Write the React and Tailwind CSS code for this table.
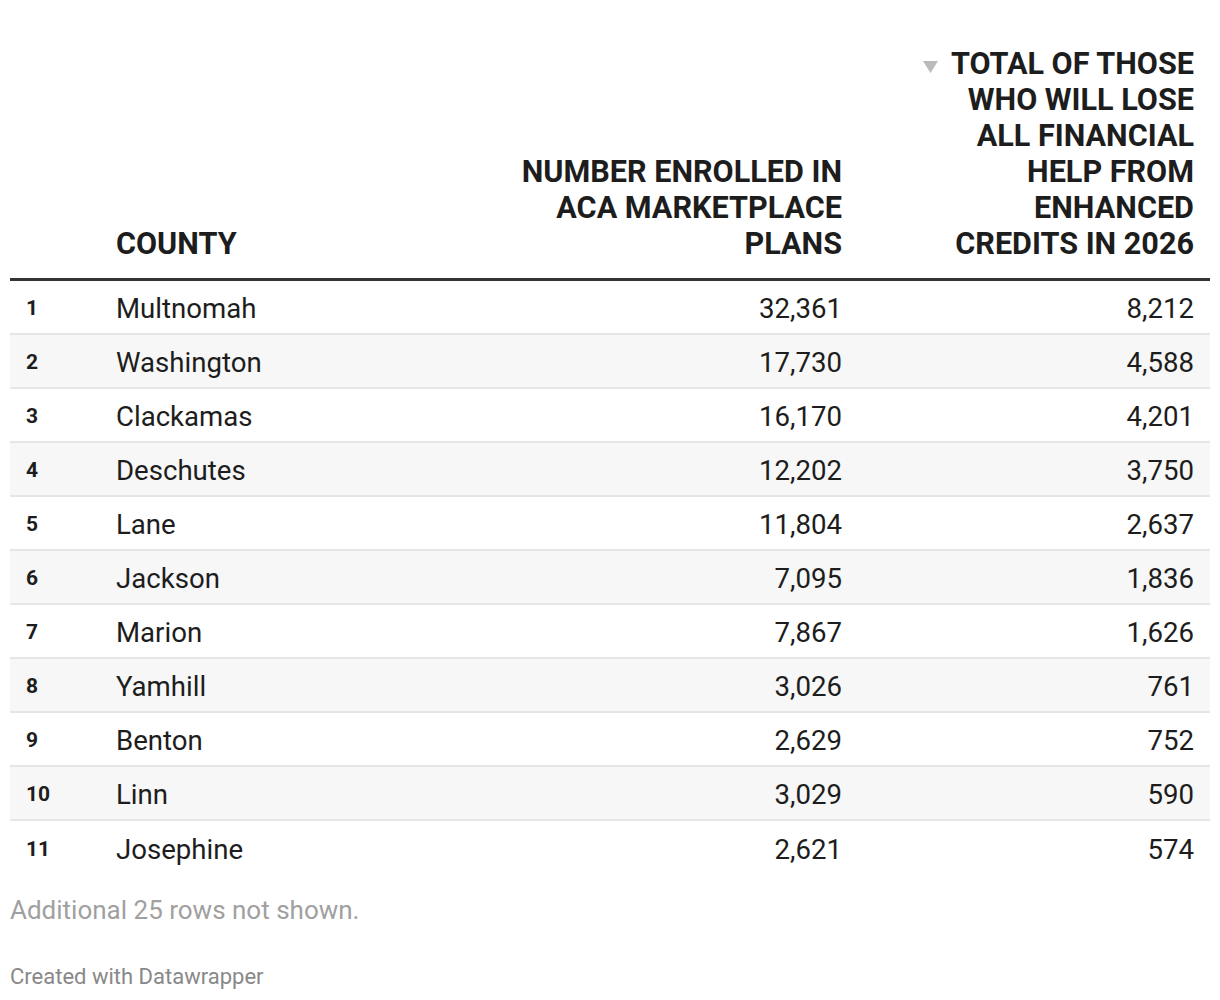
import React from "react";

const rows = [
  ["Multnomah", "32,361", "8,212"],
  ["Washington", "17,730", "4,588"],
  ["Clackamas", "16,170", "4,201"],
  ["Deschutes", "12,202", "3,750"],
  ["Lane", "11,804", "2,637"],
  ["Jackson", "7,095", "1,836"],
  ["Marion", "7,867", "1,626"],
  ["Yamhill", "3,026", "761"],
  ["Benton", "2,629", "752"],
  ["Linn", "3,029", "590"],
  ["Josephine", "2,621", "574"],
];

const App = () => {
  return (
    <div
      className="w-[1220px] bg-white px-[10px] pt-[46px] text-[#1d1d1d]"
      style={{ fontFamily: "Roboto, 'Liberation Sans', sans-serif" }}
    >
      {/* Header */}
      <div className="grid grid-cols-[90px_378px_380px_1fr] items-end border-b-[3px] border-[#333] pb-[16px] text-[30.6px] font-bold leading-[36px]">
        <div />
        <div className="pl-4">COUNTY</div>
        <div className="pr-4 text-right whitespace-nowrap">
          NUMBER ENROLLED IN
          <br />
          ACA MARKETPLACE
          <br />
          PLANS
        </div>
        <div className="pr-4 text-right whitespace-nowrap">
          <svg
            width="15"
            height="12"
            viewBox="0 0 15 12"
            className="mr-[13px] inline-block align-[1px]"
          >
            <path d="M0 0 H15 L7.5 12 Z" fill="#bbb" />
          </svg>
          TOTAL OF THOSE
          <br />
          WHO WILL LOSE
          <br />
          ALL FINANCIAL
          <br />
          HELP FROM
          <br />
          ENHANCED
          <br />
          CREDITS IN 2026
        </div>
      </div>

      {/* Rows */}
      <div>
        {rows.map((r, i) => (
          <div
            key={r[0]}
            className={`grid h-[54px] grid-cols-[90px_378px_380px_1fr] items-center pt-[3px] ${
              i % 2 === 1 ? "bg-[#f7f7f7]" : "bg-white"
            } ${i < rows.length - 1 ? "border-b-2 border-[#e6e6e6]" : ""}`}
          >
            <div className="pl-4 text-[21px] font-bold">{i + 1}</div>
            <div className="pl-4 text-[27.6px]">{r[0]}</div>
            <div className="pr-4 text-right text-[27.6px]">{r[1]}</div>
            <div className="pr-4 text-right text-[27.6px]">{r[2]}</div>
          </div>
        ))}
      </div>

      {/* Footer */}
      <div className="mt-[20px] text-[26px] leading-[30px] text-[#a0a0a0]">
        Additional 25 rows not shown.
      </div>
      <div className="mt-[40px] pb-[10px] text-[22px] leading-[24px] text-[#888]">
        Created with Datawrapper
      </div>
    </div>
  );
};

export default App;
